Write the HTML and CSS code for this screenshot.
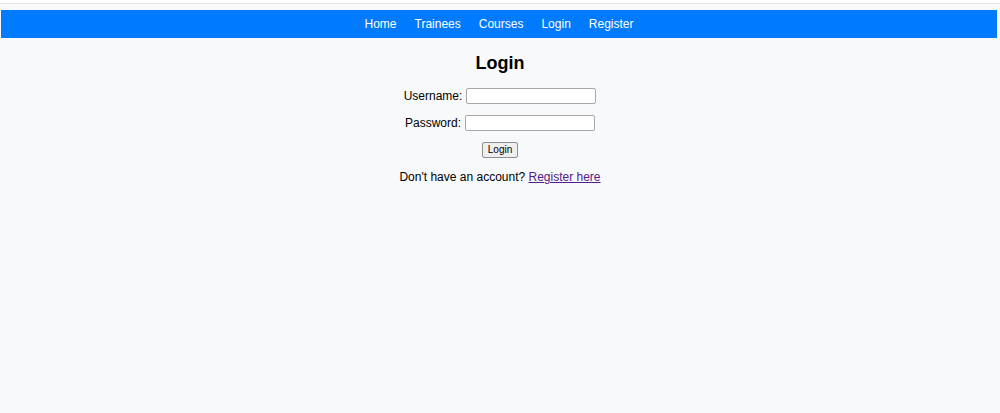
FILE: index.html
```html
<!DOCTYPE html>
<html>
<head>
<meta charset="utf-8">
<link rel="stylesheet" href="styles.css">
</head>
<body>
<div class="topbar"></div>
<nav class="nav">
  <a href="#">Home</a>
  <a href="#">Trainees</a>
  <a href="#">Courses</a>
  <a href="#">Login</a>
  <a href="#">Register</a>
</nav>
<main class="main">
  <h2 class="title">Login</h2>
  <form class="form">
    <div class="row"><label>Username:</label> <input type="text" class="field"></div>
    <div class="row"><label>Password:</label> <input type="password" class="field"></div>
    <div class="row row-btn"><button type="button" class="btn">Login</button></div>
  </form>
  <p class="note">Don't have an account? <a href="#" class="reg">Register here</a></p>
</main>
</body>
</html>
```
FILE: styles.css
```css
html, body {
  margin: 0;
  padding: 0;
  height: 100%;
}
body {
  background: #f7f9fb;
  font-family: "Liberation Sans", Arial, sans-serif;
  font-size: 12px;
  color: #000;
}
.topbar {
  height: 3px;
  background: #fff;
  border-bottom: 1px solid #e4e4e4;
}
.nav {
  margin: 6px 3px 0 1px;
  height: 28px;
  background: #007bff;
  display: flex;
  justify-content: center;
  align-items: center;
  gap: 18px;
}
.nav a {
  color: #fff;
  text-decoration: none;
  font-size: 12px;
}
.main {
  text-align: center;
}
.title {
  margin: 14px 0 0;
  font-size: 18px;
  font-weight: bold;
  line-height: 22px;
}
.form {
  margin-top: 14px;
}
.row {
  height: 16px;
  line-height: 16px;
  margin-bottom: 11px;
  display: flex;
  justify-content: center;
  align-items: center;
  gap: 4px;
}
.row-btn {
  margin-top: 1px;
}
.field {
  width: 130px;
  height: 16px;
  box-sizing: border-box;
  border: 1px solid #a9a9a9;
  border-radius: 2px;
  background: #fff;
  padding: 0 2px;
  margin: 0;
}
.btn {
  width: 36px;
  height: 16px;
  padding: 0;
  font-family: "Liberation Sans", Arial, sans-serif;
  font-size: 10px;
  background: #efefef;
  border: 1px solid #8f8f8f;
  border-radius: 2px;
  color: #000;
  line-height: 14px;
}
.note {
  margin: 9px 0 0;
  line-height: 16px;
}
.reg {
  color: #551a8b;
}
```
